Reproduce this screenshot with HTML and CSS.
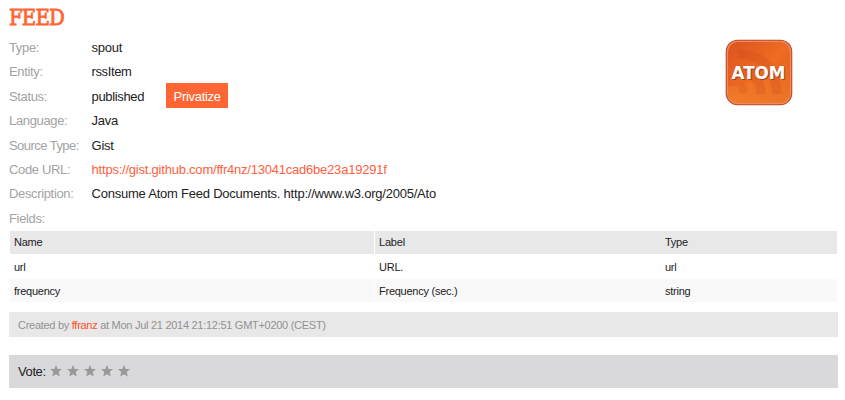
FILE: index.html
```html
<!DOCTYPE html>
<html lang="en">
<head>
<meta charset="utf-8">
<title>Feed</title>
<link rel="stylesheet" href="styles.css">
</head>
<body>
<main class="page">
  <h1 class="title">FEED</h1>
  <section class="overview">
    <dl class="details">
      <dt>Type:</dt><dd>spout</dd>
      <dt>Entity:</dt><dd class="entity">rssItem</dd>
      <dt>Status:</dt><dd class="status"><span>published</span><button class="button">Privatize</button></dd>
      <dt>Language:</dt><dd>Java</dd>
      <dt class="tight">Source Type:</dt><dd>Gist</dd>
      <dt>Code URL:</dt><dd><a class="code-url" href="#">https://gist.github.com/ffr4nz/13041cad6be23a19291f</a></dd>
      <dt>Description:</dt><dd class="description">Consume Atom Feed Documents. http://www.w3.org/2005/Ato</dd>
      <dt>Fields:</dt><dd></dd>
    </dl>
    <svg class="logo" width="68" height="67" viewBox="0 0 68 67">
      <defs>
        <linearGradient id="fill" x1="0" y1="0" x2="1" y2="1">
          <stop offset="0" stop-color="#dc5220"/>
          <stop offset=".5" stop-color="#ed6b22"/>
          <stop offset="1" stop-color="#e45d20"/>
        </linearGradient>
        <linearGradient id="shine" x1="0" y1="0" x2="0" y2="1">
          <stop offset="0" stop-color="#f58c30" stop-opacity="0"/>
          <stop offset="1" stop-color="#f58c30" stop-opacity=".5"/>
        </linearGradient>
      </defs>
      <rect x=".7" y=".7" width="66.6" height="65.6" rx="12" fill="#bd4a2b"/>
      <rect x="2.4" y="2.4" width="63.2" height="62.2" rx="10.5" fill="url(#fill)" stroke="#ee8a5c" stroke-width="1.2"/>
      <path d="M3 48Q35 45 65 22V54Q65 64 55 64H13Q3 64 3 54Z" fill="url(#shine)"/>
      <g fill="none" stroke="#c94719" stroke-opacity=".25" stroke-width="9">
        <path d="M13 31Q35 32 36 55M13 15Q50 16 52 55"/>
      </g>
      <circle cx="18" cy="50" r="5" fill="#c94719" fill-opacity=".2"/>
      <text class="logo-shadow" x="7.5" y="41" textLength="54" lengthAdjust="spacingAndGlyphs">ATOM</text>
      <text class="logo-text" x="6.5" y="40" textLength="54" lengthAdjust="spacingAndGlyphs">ATOM</text>
    </svg>
  </section>
  <table class="fields">
    <thead><tr><th class="name">Name</th><th class="label">Label</th><th class="type">Type</th></tr></thead>
    <tbody>
      <tr><td>url</td><td>URL.</td><td class="type">url</td></tr>
      <tr><td>frequency</td><td>Frequency (sec.)</td><td class="type">string</td></tr>
    </tbody>
  </table>
  <p class="created">Created by <a href="#">ffranz</a> at Mon Jul 21 2014 21:12:51 GMT+0200 (CEST)</p>
  <div class="vote">
    <span>Vote:</span>
    <div class="stars">
      <svg viewBox="0 0 12 12"><path d="M6 0 7.7 4H12L8.7 6.9 9.8 11.6 6 9.2 2.2 11.6 3.3 6.9 0 4H4.3Z"/></svg>
      <svg viewBox="0 0 12 12"><path d="M6 0 7.7 4H12L8.7 6.9 9.8 11.6 6 9.2 2.2 11.6 3.3 6.9 0 4H4.3Z"/></svg>
      <svg viewBox="0 0 12 12"><path d="M6 0 7.7 4H12L8.7 6.9 9.8 11.6 6 9.2 2.2 11.6 3.3 6.9 0 4H4.3Z"/></svg>
      <svg viewBox="0 0 12 12"><path d="M6 0 7.7 4H12L8.7 6.9 9.8 11.6 6 9.2 2.2 11.6 3.3 6.9 0 4H4.3Z"/></svg>
      <svg viewBox="0 0 12 12"><path d="M6 0 7.7 4H12L8.7 6.9 9.8 11.6 6 9.2 2.2 11.6 3.3 6.9 0 4H4.3Z"/></svg>
    </div>
  </div>
</main>
</body>
</html>
```
FILE: styles.css
```css
* { box-sizing: border-box; }
body {
  margin: 0;
  background: #fff;
  color: #222;
  font: 13px "Liberation Sans", Arial, sans-serif;
  letter-spacing: -0.25px;
}
a { color: #ff4f2a; text-decoration: none; }
.page { padding: 0 7px 0 9px; }
.title {
  margin: 0;
  height: 35px;
  padding-top: 5px;
  color: #ff6633;
  font: 22px/26px "DejaVu Serif Condensed", "DejaVu Serif", serif;
  font-stretch: condensed;
  letter-spacing: -0.9px;
  -webkit-text-stroke: 0.8px #ff6633;
}
.overview { display: flex; justify-content: space-between; height: 195px; }
.details {
  display: grid;
  grid-template-columns: 82.6px auto;
  grid-auto-rows: 24.4px;
  margin: 0;
  line-height: 25px;
}
.details dt { color: #a3a3a3; white-space: nowrap; letter-spacing: -0.35px; }
.details .tight { letter-spacing: -0.55px; }
.details dd { margin: 0; white-space: nowrap; }
.details .entity { letter-spacing: -0.4px; }
.details .description { letter-spacing: -0.23px; }
.status { display: flex; gap: 22px; letter-spacing: -0.35px; }
.button {
  width: 62px;
  height: 25px;
  margin-top: -1px;
  padding: 2px 0 0;
  border: 0;
  background: #ff6633;
  color: #fff;
  font: inherit;
  line-height: 23px;
  letter-spacing: -0.3px;
}
.code-url { color: #ff6040; letter-spacing: -0.22px; }
.logo { margin: 4px 45px 0 0; }
.logo-text, .logo-shadow { font: bold 18.5px "DejaVu Sans", sans-serif; letter-spacing: 0; }
.logo-text { fill: #fff; }
.logo-shadow { fill: #8f3c18; fill-opacity: .8; }
.fields {
  width: 829px;
  border-spacing: 1px;
  table-layout: fixed;
  font-size: 11px;
  letter-spacing: -0.25px;
}
.fields th, .fields td {
  height: 23px;
  padding: 0 4px 1px;
  text-align: left;
  font-weight: 400;
}
.fields th { background: #e8e8e8; }
.fields .name { width: 364px; }
.fields .label { width: 285px; letter-spacing: -0.2px; }
.fields th.type { box-shadow: -1px 0 #e8e8e8; }
.fields tbody tr:first-child td { padding: 1px 4px 0; }
.fields tbody tr:last-child td { padding: 1px 4px 0; background: #f9f9f9; }
.fields tbody tr:last-child .type { box-shadow: -1px 0 #f9f9f9; }
.created {
  margin: 9px 0 18px;
  height: 25px;
  padding: 1px 9px 0;
  background: #e8e8e8;
  color: #929292;
  font-size: 11px;
  line-height: 25px;
  letter-spacing: -0.28px;
}
.vote {
  display: flex;
  align-items: center;
  gap: 4px;
  height: 33px;
  padding: 0 9px;
  background: #d9d9db;
  letter-spacing: -0.4px;
}
.stars { display: flex; gap: 5px; }
.stars svg { width: 12px; height: 12px; fill: #999; margin-top: -2px; }
```
